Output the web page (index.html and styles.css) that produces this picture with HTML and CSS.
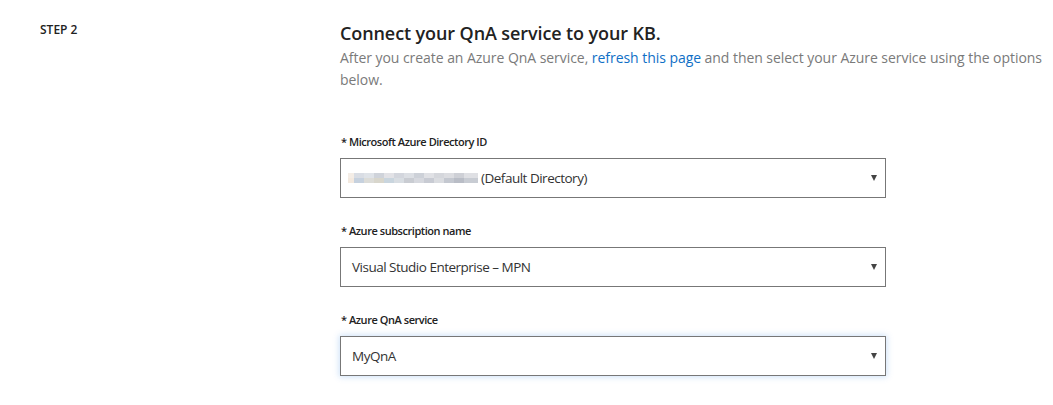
FILE: index.html
```html
<!DOCTYPE html>
<html lang="en">
<head>
<meta charset="utf-8">
<title>Step 2</title>
<link rel="stylesheet" href="styles.css">
</head>
<body>
<div class="step">
  <div class="step-label">STEP 2</div>
  <div class="step-body">
    <h2 class="title">Connect your QnA service to your KB.</h2>
    <p class="desc">After you create an Azure QnA service, <a href="#" class="link">refresh this page</a> and then select your Azure service using the options below.</p>

    <div class="field">
      <div class="label">* Microsoft Azure Directory ID</div>
      <div class="select">
        <span class="value"><span class="blur"></span> (Default Directory)</span>
        <span class="caret"></span>
      </div>
    </div>

    <div class="field">
      <div class="label">* Azure subscription name</div>
      <div class="select">
        <span class="value">Visual Studio Enterprise – MPN</span>
        <span class="caret"></span>
      </div>
    </div>

    <div class="field">
      <div class="label">* Azure QnA service</div>
      <div class="select focused">
        <span class="value">MyQnA</span>
        <span class="caret"></span>
      </div>
    </div>
  </div>
</div>
</body>
</html>
```
FILE: styles.css
```css
html, body {
  margin: 0;
  padding: 0;
  background: #ffffff;
}
body {
  font-family: "Open Sans", "Noto Sans", sans-serif;
  color: #222;
  width: 1053px;
  height: 405px;
  overflow: hidden;
}
.step {
  display: flex;
  align-items: flex-start;
}
.step-label {
  width: 300px;
  flex: 0 0 300px;
  padding-left: 40px;
  padding-top: 22px;
  font-size: 12px;
  line-height: 16px;
  font-weight: 600;
  color: #222;
}
.step-body {
  width: 720px;
  flex: 0 0 720px;
  padding-top: 23px;
}
.title {
  margin: 0;
  font-size: 18px;
  line-height: 20px;
  font-weight: 600;
  color: #222;
  letter-spacing: -0.1px;
}
.desc {
  margin: 4px 0 0 0;
  font-size: 14px;
  line-height: 22px;
  color: #7a7a7a;
  letter-spacing: -0.05px;
  width: 712px;
}
.link {
  color: #0f6fc6;
  text-decoration: none;
}
.field {
  width: 546px;
  margin-bottom: 25px;
}
.desc + .field {
  margin-top: 43px;
}
.label {
  font-size: 11px;
  line-height: 16px;
  font-weight: 600;
  color: #222;
  margin-bottom: 8px;
  margin-left: 1px;
  letter-spacing: -0.45px;
}
.select {
  box-sizing: border-box;
  height: 40px;
  border: 1px solid #777;
  display: flex;
  align-items: center;
  justify-content: space-between;
  padding: 0 8px 0 11px;
  font-size: 13.5px;
  color: #333;
  background: #fff;
}
.select.focused {
  box-shadow: 0 0 6px 1px rgba(80, 150, 230, 0.28);
}
.value {
  display: flex;
  align-items: center;
  white-space: pre;
  letter-spacing: -0.5px;
}
.blur {
  display: inline-block;
  width: 130px;
  height: 10px;
  margin-left: -4px;
  background:
    linear-gradient(90deg,
      #f4ede6 0 6px, #d9dde4 6px 16px, #dfe3e8 16px 26px, #cfd3da 26px 36px,
      #e2e2e6 36px 46px, #d3d6dd 46px 56px, #dcdfe4 56px 66px, #cdd1d8 66px 76px,
      #e0e1e5 76px 86px, #d5d7dc 86px 96px, #dcdde1 96px 106px, #ced0d6 106px 116px,
      #dfe0e4 116px 130px) top / 100% 5px no-repeat,
    linear-gradient(90deg,
      #f3e9df 0 6px, #c6d1de 6px 16px, #dcdcd8 16px 26px, #d8d6cc 26px 36px,
      #c9d5de 36px 46px, #d8dde2 46px 56px, #c9ccd2 56px 66px, #d6d8de 66px 76px,
      #c8cbd3 76px 86px, #dadce0 86px 96px, #c4c8d0 96px 106px, #b9bdc6 106px 116px,
      #c8ccd3 116px 130px) bottom / 100% 5px no-repeat;
}
.caret {
  width: 0;
  height: 0;
  border-left: 3.5px solid transparent;
  border-right: 3.5px solid transparent;
  border-top: 6px solid #444;
}
```
